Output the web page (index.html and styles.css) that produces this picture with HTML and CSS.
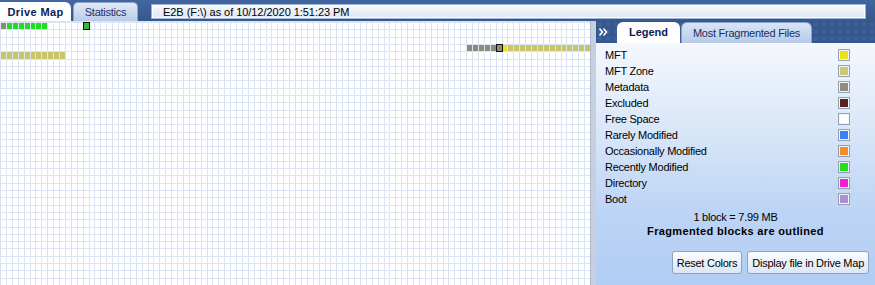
FILE: index.html
```html
<!DOCTYPE html>
<html>
<head>
<meta charset="utf-8">
<link rel="stylesheet" href="styles.css">
</head>
<body>
<div class="app">
  <div class="topbar">
    <div class="tabs">
      <div class="ttab ttab-active">Drive Map</div>
      <div class="ttab">Statistics</div>
    </div>
    <div class="field">E2B (F:\) as of 10/12/2020 1:51:23 PM</div>
  </div>
  <div class="main">
    <div class="map" id="map"></div>
    <div class="splitter"></div>
    <div class="panel">
      <div class="panel-head">
        <span class="collapse"><svg width="9" height="8" viewBox="0 0 9 8"><path d="M0.5 0.5 L3.5 4 L0.5 7.5 M4.5 0.5 L7.5 4 L4.5 7.5" fill="none" stroke="#fff" stroke-width="1.6"/></svg></span>
        <div class="ptab ptab-active">Legend</div>
        <div class="ptab">Most Fragmented Files</div>
      </div>
      <div class="panel-body">
        <ul class="legend">
          <li><span>MFT</span><i class="sw c-mft"></i></li>
          <li><span>MFT Zone</span><i class="sw c-zone"></i></li>
          <li><span>Metadata</span><i class="sw c-meta"></i></li>
          <li><span>Excluded</span><i class="sw c-excl"></i></li>
          <li><span>Free Space</span><i class="sw c-free"></i></li>
          <li><span>Rarely Modified</span><i class="sw c-rare"></i></li>
          <li><span>Occasionally Modified</span><i class="sw c-occ"></i></li>
          <li><span>Recently Modified</span><i class="sw c-recent"></i></li>
          <li><span>Directory</span><i class="sw c-dir"></i></li>
          <li><span>Boot</span><i class="sw c-boot"></i></li>
        </ul>
        <div class="scale">1 block = 7.99 MB</div>
        <div class="note">Fragmented blocks are outlined</div>
        <div class="buttons">
          <button class="btn">Reset Colors</button>
          <button class="btn">Display file in Drive Map</button>
        </div>
      </div>
    </div>
  </div>
</div>
<script src="app.js"></script>
</body>
</html>
```
FILE: styles.css
```css
* { box-sizing: border-box; }
body {
  margin: 0;
  font-family: "Liberation Sans", Arial, sans-serif;
  font-size: 11px;
  letter-spacing: -0.25px;
  color: #000;
  background: #fff;
}
.app {
  width: 875px;
  height: 285px;
  display: grid;
  grid-template-rows: 21px 264px;
  overflow: hidden;
}
.topbar {
  background: linear-gradient(#4466a0, #36588f);
  display: flex;
  align-items: flex-start;
}
.tabs {
  display: flex;
  gap: 2px;
  align-self: flex-end;
}
.ttab {
  height: 19px;
  width: 65px;
  padding-top: 3px;
  text-align: center;
  color: #1d3068;
  background: linear-gradient(#e2eaf7, #b7cbe8);
  border: 1px solid #8fa6cb;
  border-bottom: none;
  border-radius: 5px 5px 0 0;
}
.ttab-active {
  width: 71px;
  background: #fff;
  border: none;
  border-radius: 0 6px 0 0;
  font-weight: bold;
  color: #0c1b54;
  padding-top: 4px;
  letter-spacing: 0.4px;
}
.field {
  margin: 4px 0 0 13px;
  width: 715px;
  height: 15px;
  padding: 1px 0 0 11px;
  border: 1px solid #9db2d3;
  background: linear-gradient(#f7f9fd, #dfe7f3);
  box-shadow: inset 0 0 0 1px #fff;
  color: #000;
  letter-spacing: -0.05px;
}
.main {
  display: grid;
  grid-template-columns: 590px 6px 279px;
}
.map {
  display: grid;
  grid-template-columns: repeat(100, 1fr);
  grid-template-rows: repeat(36, 1fr);
  gap: 1px;
  padding: 2px 0 0 1px;
  background: #dbe4f2;
}
.cell { background: #fff; }
.b-meta { background: #8b8b78; }
.b-recent { background: #22dd22; }
.b-zone { background: #c9c56e; }
.b-mft { background: #eae31c; }
.frag { outline: 1px solid #111; }
.b-recent.frag { background: #35b835; }
.splitter {
  background: #c7d0e1;
  border-left: 1px solid #aab6cb;
}
.panel {
  display: flex;
  flex-direction: column;
}
.panel-head {
  height: 22px;
  background:
    radial-gradient(circle at 50% 50%, rgba(255,255,255,0.05) 2px, transparent 3px) 0 0 / 8px 7px,
    #35578f;
  display: flex;
  align-items: flex-end;
  gap: 1px;
}
.collapse {
  align-self: flex-start;
  margin: 7px 8px 0 3px;
  display: flex;
}
.ptab {
  height: 21px;
  width: 131px;
  padding-top: 4px;
  text-align: center;
  color: #1b2d60;
  background: linear-gradient(#d9e5f6, #b6cae8);
  border: 1px solid #8ea4c8;
  border-bottom: none;
  border-radius: 6px 6px 0 0;
}
.ptab-active {
  width: 63px;
  background: #fff;
  border: none;
  font-weight: bold;
  color: #0a1a5a;
  letter-spacing: 0;
}
.panel-body {
  flex: 1;
  background: linear-gradient(#f5f8fd 0%, #dae7f8 35%, #bcd4f5 70%, #b2cdf4 100%);
  display: flex;
  flex-direction: column;
  padding: 4px 6px 0 9px;
}
.legend {
  list-style: none;
  margin: 0;
  padding: 0 19px 0 0;
}
.legend li {
  height: 16px;
  display: flex;
  align-items: center;
  justify-content: space-between;
}
.sw {
  width: 12px;
  height: 12px;
  border: 1px solid #939fb3;
  box-shadow: inset 0 0 0 1px #f4f4f4;
}
.c-mft { background: #e8e21a; }
.c-zone { background: #cdc778; }
.c-meta { background: #8e8e79; }
.c-excl { background: #5a2121; }
.c-free { background: #fff; }
.c-rare { background: #3c7ff2; }
.c-occ { background: #f98a2c; }
.c-recent { background: #22dd22; }
.c-dir { background: #f21ed6; }
.c-boot { background: #aa8fd2; }
.scale {
  margin-top: 3px;
  text-align: center;
  line-height: 14px;
  padding-right: 3px;
}
.note {
  text-align: center;
  font-weight: bold;
  line-height: 14px;
  letter-spacing: 0.35px;
  padding-right: 3px;
}
.buttons {
  margin-top: 13px;
  display: flex;
  justify-content: flex-end;
  gap: 5px;
}
.btn {
  height: 23px;
  padding: 0 4px;
  font: inherit;
  letter-spacing: -0.25px;
  color: #000;
  background: linear-gradient(#fbfcfe, #dce6f4);
  border: 1px solid #8fa2bf;
  border-radius: 3px;
}
```
FILE: app.js
```js
const map = document.getElementById('map');
const blocks = {};
function put(r, c, t, frag) { blocks[r + ',' + c] = { t: t, frag: !!frag }; }
put(0, 0, 'meta');
for (let c = 1; c <= 7; c++) put(0, c, 'recent');
put(0, 14, 'recent', true);
for (let c = 79; c <= 83; c++) put(3, c, 'meta');
put(3, 84, 'meta', true);
put(3, 85, 'mft');
for (let c = 86; c <= 99; c++) put(3, c, 'zone');
for (let c = 0; c <= 10; c++) put(4, c, 'zone');
const frag = document.createDocumentFragment();
for (let r = 0; r < 36; r++) {
  for (let c = 0; c < 100; c++) {
    const d = document.createElement('div');
    d.className = 'cell';
    const b = blocks[r + ',' + c];
    if (b) {
      d.className += ' b-' + b.t;
      if (b.frag) d.className += ' frag';
    }
    frag.appendChild(d);
  }
}
map.appendChild(frag);
```
